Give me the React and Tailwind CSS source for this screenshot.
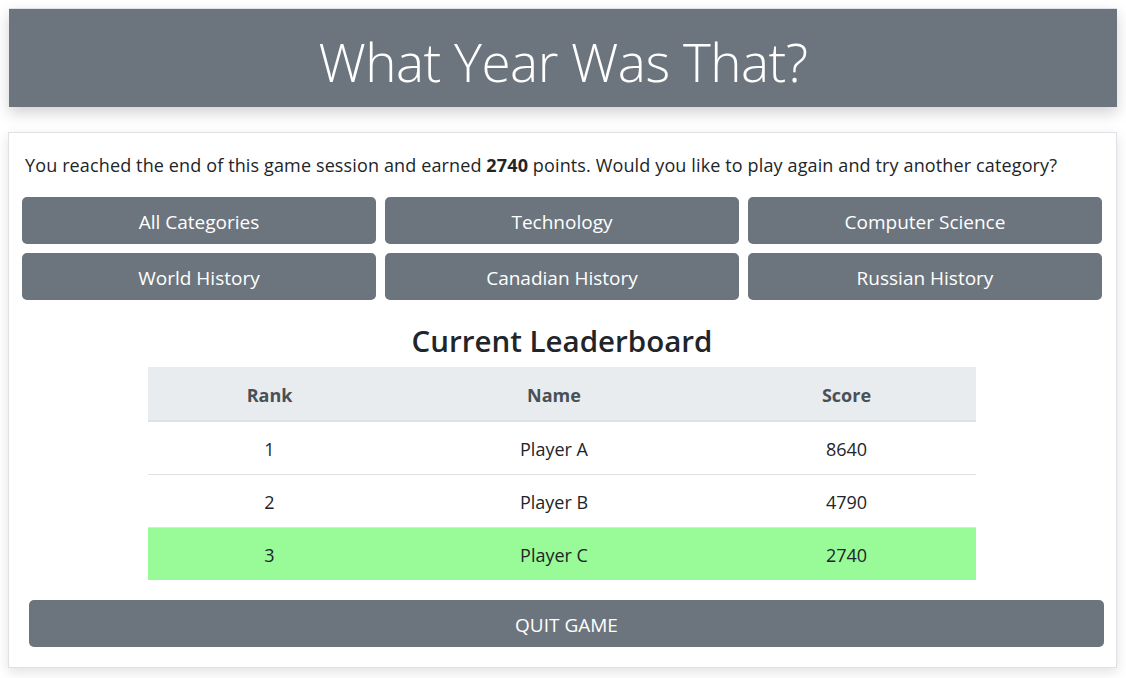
import React from 'react'

const categories = [
  'All Categories',
  'Technology',
  'Computer Science',
  'World History',
  'Canadian History',
  'Russian History',
]

const leaders = [
  { rank: 1, name: 'Player A', score: 8640 },
  { rank: 2, name: 'Player B', score: 4790 },
  { rank: 3, name: 'Player C', score: 2740, current: true },
]

const App = () => {
  return (
    <div className="min-h-[678px] bg-white text-[#212529] font-['Open_Sans',sans-serif] pt-[8px] pl-[8px] pr-[9px]">
      {/*  Title banner */}
      <div className="ml-[1px] h-[99px] bg-[#6c757d] border-t border-[#dee2e6] shadow-[0_6px_14px_rgba(0,0,0,0.18)] flex items-center justify-center">
        <h1 className="text-white font-light text-[53px] leading-none tracking-[-0.5px] mt-[6px]">What Year Was That?</h1>
      </div>

      {/*  Game over card */}
      <div className="mt-[25px] h-[536px] border border-[#dee2e6] bg-white shadow-[0_4px_12px_rgba(0,0,0,0.12)] pt-[20px] pl-[13px] pr-[14px]">
        <p className="pl-[3px] text-[18px] leading-[24px] tracking-[0.13px]">
          You reached the end of this game session and earned <b>2740</b> points. Would you like to play again and try another category?
        </p>

        <div className="mt-[20px] grid grid-cols-3 gap-x-[9px] gap-y-[9px]">
          {categories.map(c => (
            <button key={c}
                    className="h-[47px] rounded-[5px] bg-[#6c757d] text-white text-[19px] pt-[3px]">
              {c}
            </button>
          ))}
        </div>

        <h2 className="mt-[23px] mb-[8px] text-center text-[29.5px] leading-[36px] font-semibold">Current Leaderboard</h2>

        <table className="mx-auto w-[828px] text-center text-[18px]">
          <thead>
            <tr className="bg-[#e9ecef] text-[#495057]">
              <th className="h-[54px] w-[243px] pt-[3px] font-bold border-b-2 border-[#dee2e6]">Rank</th>
              <th className="h-[54px] pt-[3px] font-bold border-b-2 border-[#dee2e6]">Name</th>
              <th className="h-[54px] w-[259px] pt-[3px] font-bold border-b-2 border-[#dee2e6]">Score</th>
            </tr>
          </thead>
          <tbody>
            {leaders.map(l => (
              <tr key={l.rank} className={l.current ? 'bg-[#98fb98]' : ''}>
                <td className={'h-[53px] pt-[3px] ' + (l.current ? '' : 'border-b border-[#dee2e6]')}>{l.rank}</td>
                <td className={'h-[53px] pt-[3px] ' + (l.current ? '' : 'border-b border-[#dee2e6]')}>{l.name}</td>
                <td className={'h-[53px] pt-[3px] ' + (l.current ? '' : 'border-b border-[#dee2e6]')}>{l.score}</td>
              </tr>
            ))}
          </tbody>
        </table>

        <button className="mt-[20px] ml-[7px] w-[1075px] h-[47px] rounded-[5px] bg-[#6c757d] text-white text-[19px] pt-[3px]">
          QUIT GAME
        </button>
      </div>
    </div>
  )
}

export default App
